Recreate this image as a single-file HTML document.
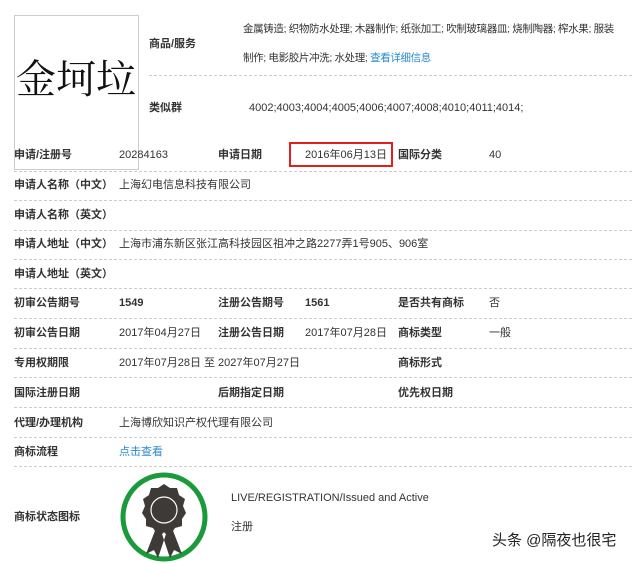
<!DOCTYPE html>
<html><head><meta charset="utf-8"><style>
body{margin:0;width:640px;height:563px;background:#fff;font-family:"Liberation Sans","Noto Sans CJK SC",sans-serif;font-size:11px;color:#333;position:relative;overflow:hidden}
.a{position:absolute;white-space:nowrap;line-height:14px}
.b{font-weight:bold;color:#333}
.l{position:absolute;left:14px;width:618px;border-top:1px dashed #ccc;height:0}
.k{color:#2a8ad2}
</style></head><body>
<div class="a" style="left:14px;top:15px;width:125px;height:155px;border:1px solid #ccc;box-sizing:border-box;position:absolute"></div>
<div class="a" style="left:16px;top:52px;font-family:'Noto Serif CJK SC',serif;font-size:40px;line-height:50px;color:#111">金坷垃</div>
<div class="a b" style="left:149px;top:37px">商品/服务</div>
<div class="a" style="left:243px;top:22px;font-size:10.5px;letter-spacing:-0.35px">金属铸造; 织物防水处理; 木器制作; 纸张加工; 吹制玻璃器皿; 烧制陶器; 榨水果; 服装</div>
<div class="a" style="left:243px;top:51px;font-size:10.5px;letter-spacing:-0.35px">制作; 电影胶片冲洗; 水处理; <span class="k">查看详细信息</span></div>
<div class="l" style="left:149px;width:483px;top:75px"></div>
<div class="a b" style="left:149px;top:101px">类似群</div>
<div class="a" style="left:249px;top:101px">4002;4003;4004;4005;4006;4007;4008;4010;4011;4014;</div>

<div class="a b" style="left:14px;top:148px">申请/注册号</div>
<div class="a" style="left:119px;top:148px">20284163</div>
<div class="a b" style="left:218px;top:148px">申请日期</div>
<div style="position:absolute;left:289px;top:142px;width:104px;height:25px;border:2px solid #e0201c;box-sizing:border-box"></div>
<div class="a" style="left:305px;top:148px">2016年06月13日</div>
<div class="a b" style="left:398px;top:148px">国际分类</div>
<div class="a" style="left:489px;top:148px">40</div>
<div class="l" style="top:171px"></div>
<div class="a b" style="left:14px;top:178px">申请人名称（中文）</div>
<div class="a" style="left:119px;top:178px">上海幻电信息科技有限公司</div>
<div class="l" style="top:200px"></div>
<div class="a b" style="left:14px;top:208px">申请人名称（英文）</div>
<div class="l" style="top:230px"></div>
<div class="a b" style="left:14px;top:237px">申请人地址（中文）</div>
<div class="a" style="left:119px;top:237px">上海市浦东新区张江高科技园区祖冲之路2277弄1号905、906室</div>
<div class="l" style="top:259px"></div>
<div class="a b" style="left:14px;top:267px">申请人地址（英文）</div>
<div class="l" style="top:288px"></div>
<div class="a b" style="left:14px;top:296px">初审公告期号</div>
<div class="a b" style="left:119px;top:296px">1549</div>
<div class="a b" style="left:218px;top:296px">注册公告期号</div>
<div class="a b" style="left:305px;top:296px">1561</div>
<div class="a b" style="left:398px;top:296px">是否共有商标</div>
<div class="a" style="left:489px;top:296px">否</div>
<div class="l" style="top:318px"></div>
<div class="a b" style="left:14px;top:326px">初审公告日期</div>
<div class="a" style="left:119px;top:326px">2017年04月27日</div>
<div class="a b" style="left:218px;top:326px">注册公告日期</div>
<div class="a" style="left:305px;top:326px">2017年07月28日</div>
<div class="a b" style="left:398px;top:326px">商标类型</div>
<div class="a" style="left:489px;top:326px">一般</div>
<div class="l" style="top:348px"></div>
<div class="a b" style="left:14px;top:356px">专用权期限</div>
<div class="a" style="left:119px;top:356px">2017年07月28日 至 2027年07月27日</div>
<div class="a b" style="left:398px;top:356px">商标形式</div>
<div class="l" style="top:377px"></div>
<div class="a b" style="left:14px;top:386px">国际注册日期</div>
<div class="a b" style="left:218px;top:386px">后期指定日期</div>
<div class="a b" style="left:398px;top:386px">优先权日期</div>
<div class="l" style="top:407px"></div>
<div class="a b" style="left:14px;top:416px">代理/办理机构</div>
<div class="a" style="left:119px;top:416px">上海博欣知识产权代理有限公司</div>
<div class="l" style="top:437px"></div>
<div class="a b" style="left:14px;top:445px">商标流程</div>
<div class="a k" style="left:119px;top:445px">点击查看</div>
<div class="l" style="top:466px"></div>
<div class="a b" style="left:14px;top:510px">商标状态图标</div>
<svg style="position:absolute;left:120px;top:470px" width="90" height="92" viewBox="0 0 90 92">
<ellipse cx="44" cy="47" rx="41" ry="42" fill="none" stroke="#1a9a3a" stroke-width="5"/>
<path d="M36 58 L26 84 L34 80 L38 88 L46 64 Z M52 58 L62 84 L54 80 L50 88 L42 64 Z" fill="#3d3a37"/>
<path d="M44 14 L50 18 L57 18 L59 25 L65 29 L63 36 L66 43 L62 49 L62 56 L55 58 L51 64 L44 62 L37 64 L33 58 L26 56 L26 49 L22 43 L25 36 L23 29 L29 25 L31 18 L38 18 Z" fill="#3d3a37"/>
<circle cx="44" cy="40" r="13" fill="#3d3a37" stroke="#fff" stroke-width="1.2"/>
</svg>
<div class="a" style="left:231px;top:491px">LIVE/REGISTRATION/Issued and Active</div>
<div class="a" style="left:231px;top:520px">注册</div>
<div class="a" style="left:492px;top:531px;font-size:15px;line-height:20px;color:#222">头条 @隔夜也很宅</div>
</body></html>
